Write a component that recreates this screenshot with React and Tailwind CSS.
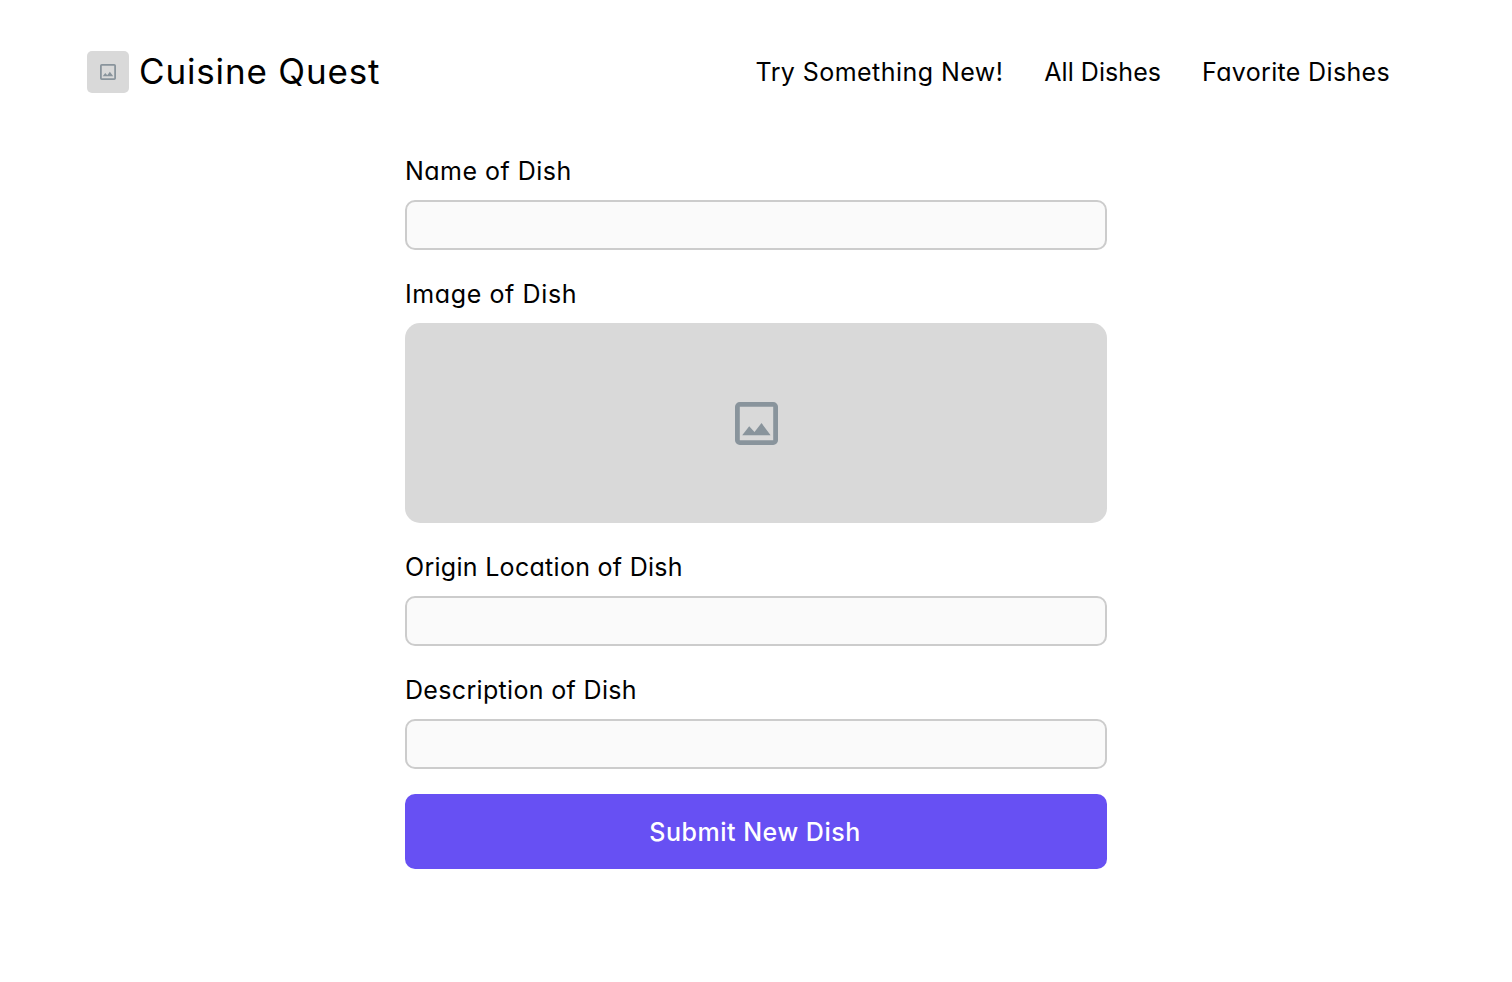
function ImageIcon({ className }) {
  return (
    <svg viewBox="0 0 43 43" className={className} fill="#89949c" aria-hidden="true">
      <path fillRule="evenodd" d="M4.8 0H38.2A4.8 4.8 0 0 1 43 4.8V38.2A4.8 4.8 0 0 1 38.2 43H4.8A4.8 4.8 0 0 1 0 38.2V4.8A4.8 4.8 0 0 1 4.8 0ZM4.8 4.8V38.2H38.2V4.8Z" />
      <path d="M7.2 33.2L14.2 24.2L19.5 30L26.5 21L35.6 33.2Z" />
    </svg>
  );
}

function Field({ label, tracking, children }) {
  return (
    <label className="flex flex-col gap-[10px]">
      <span className={`flex h-[38px] items-center pt-0.5 text-[25px] ${tracking}`}>{label}</span>
      {children}
    </label>
  );
}

function TextInput() {
  return (
    <input
      type="text"
      className="h-[50px] w-full rounded-[10px] border-2 border-[#cccccc] bg-[#fafafa] px-3 text-xl outline-none"
    />
  );
}

export default function App() {
  return (
    <div className="min-h-[982px] bg-white font-['Inter',sans-serif] text-black [font-feature-settings:'cv11']">
      <header className="flex h-[152px] items-start justify-between pt-[51px] pr-[122px] pl-[87px]">
        <div className="flex h-[42px] items-center gap-[10px]">
          <div className="flex size-[42px] items-center justify-center rounded-[5px] bg-[#d9d9d9]">
            <ImageIcon className="size-4" />
          </div>
          <h1 className="pb-0.5 text-[35px] leading-[42px] tracking-[0.84px]">Cuisine Quest</h1>
        </div>
        <nav className="flex h-[42px] items-center gap-[41px] pt-0.5 text-[25px]">
          <a href="#new" className="tracking-[0.44px]">Try Something New!</a>
          <a href="#all" className="tracking-[0.05px]">All Dishes</a>
          <a href="#favorites" className="tracking-[0.34px]">Favorite Dishes</a>
        </nav>
      </header>
      <form className="mx-auto flex w-[702px] flex-col gap-[25px]">
        <Field label="Name of Dish" tracking="tracking-[0.48px]"><TextInput /></Field>
        <Field label="Image of Dish" tracking="tracking-[0.61px]">
          <div className="flex h-[200px] items-center justify-center rounded-[15px] bg-[#d9d9d9]">
            <ImageIcon className="size-[43px]" />
          </div>
        </Field>
        <Field label="Origin Location of Dish" tracking="tracking-[0.29px]"><TextInput /></Field>
        <Field label="Description of Dish" tracking="tracking-[0.33px]"><TextInput /></Field>
        <button
          type="button"
          className="h-[75px] rounded-[10px] bg-[#6750f3] pt-0.5 pr-0.5 text-[25px] font-medium tracking-[0.52px] text-white"
        >
          Submit New Dish
        </button>
      </form>
    </div>
  );
}
